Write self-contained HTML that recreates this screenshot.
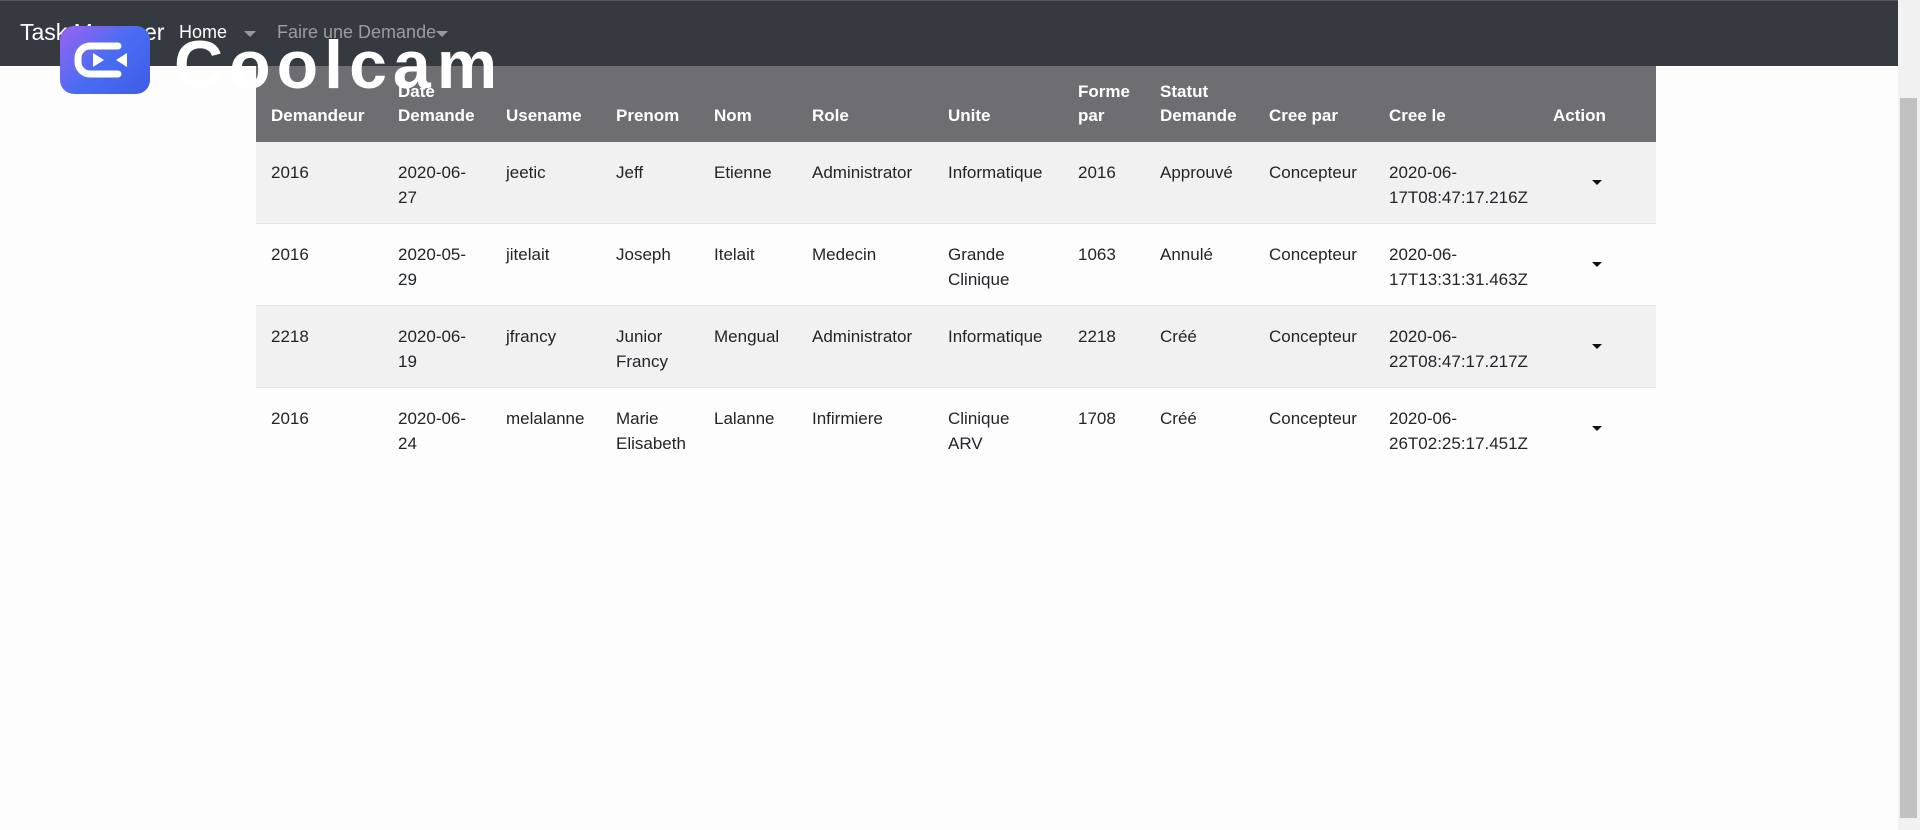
<!DOCTYPE html>
<html><head><meta charset="utf-8"><style>
*{margin:0;padding:0;box-sizing:border-box}
body{width:1920px;height:830px;overflow:hidden;background:#fdfdfd;font-family:"Liberation Sans",sans-serif;color:#212529;position:relative}
.nav{position:absolute;left:0;top:0;width:1898px;height:66px;background:#343a40;border-top:1px solid #555}
.nav span{position:absolute;top:21px;font-size:18px;color:#fff}
.caret{position:absolute;top:30px;width:0;height:0;border-left:6px solid transparent;border-right:6px solid transparent;border-top:6px solid #999}
.sb{position:absolute;left:1898px;top:0;width:22px;height:830px;background:#f1f1f1}
.thumb{position:absolute;left:1900px;top:98px;width:17px;height:720px;background:#c1c1c1}
.thead{position:absolute;left:256px;top:66px;width:1400px;height:76px;background:#6d6d72}
.th{position:absolute;color:#fff;font-weight:bold;font-size:17px;line-height:24px}
.row{position:absolute;left:256px;width:1400px;height:82px;border-bottom:1px solid #dee2e6}
.td{position:absolute;font-size:17px;line-height:25px;color:#212529}
.dd{position:absolute;width:0;height:0;border-left:5px solid transparent;border-right:5px solid transparent;border-top:5px solid #111}
.logo{position:absolute;left:60px;top:26px;width:90px;height:68px;border-radius:14px;background:linear-gradient(135deg,#9a63f0,#4a6cf2 50%,#3d5ce8)}
.cool{position:absolute;left:174px;top:25px;font-size:68px;font-weight:bold;color:#fff;letter-spacing:6px;line-height:80px}
</style></head><body>
<div class="nav">
<span style="left:20px;font-size:23px;top:18px">Task Manager</span>
<span style="left:179px">Home</span><div class="caret" style="left:244px"></div>
<span style="left:277px;color:#9a9da0">Faire une Demande</span><div class="caret" style="left:436px"></div>
</div>
<div class="sb"></div><div class="thumb"></div>
<div class="thead">
<div class="th" style="left:15px;top:38px">Demandeur</div>
<div class="th" style="left:142px;top:14px">Date<br>Demande</div>
<div class="th" style="left:250px;top:38px">Usename</div>
<div class="th" style="left:360px;top:38px">Prenom</div>
<div class="th" style="left:458px;top:38px">Nom</div>
<div class="th" style="left:556px;top:38px">Role</div>
<div class="th" style="left:692px;top:38px">Unite</div>
<div class="th" style="left:822px;top:14px">Forme<br>par</div>
<div class="th" style="left:904px;top:14px">Statut<br>Demande</div>
<div class="th" style="left:1013px;top:38px">Cree par</div>
<div class="th" style="left:1133px;top:38px">Cree le</div>
<div class="th" style="left:1297px;top:38px">Action</div>
</div>

<div class="row" style="top:142px;background:#f1f1f1">
<div class="td" style="left:15px;top:18px">2016</div>
<div class="td" style="left:142px;top:18px">2020-06-<br>27</div>
<div class="td" style="left:250px;top:18px">jeetic</div>
<div class="td" style="left:360px;top:18px">Jeff</div>
<div class="td" style="left:458px;top:18px">Etienne</div>
<div class="td" style="left:556px;top:18px">Administrator</div>
<div class="td" style="left:692px;top:18px">Informatique</div>
<div class="td" style="left:822px;top:18px">2016</div>
<div class="td" style="left:904px;top:18px">Approuvé</div>
<div class="td" style="left:1013px;top:18px">Concepteur</div>
<div class="td" style="left:1133px;top:18px">2020-06-<br>17T08:47:17.216Z</div>
<div class="dd" style="left:1336px;top:38px"></div>
</div>
<div class="row" style="top:224px">
<div class="td" style="left:15px;top:18px">2016</div>
<div class="td" style="left:142px;top:18px">2020-05-<br>29</div>
<div class="td" style="left:250px;top:18px">jitelait</div>
<div class="td" style="left:360px;top:18px">Joseph</div>
<div class="td" style="left:458px;top:18px">Itelait</div>
<div class="td" style="left:556px;top:18px">Medecin</div>
<div class="td" style="left:692px;top:18px">Grande<br>Clinique</div>
<div class="td" style="left:822px;top:18px">1063</div>
<div class="td" style="left:904px;top:18px">Annulé</div>
<div class="td" style="left:1013px;top:18px">Concepteur</div>
<div class="td" style="left:1133px;top:18px">2020-06-<br>17T13:31:31.463Z</div>
<div class="dd" style="left:1336px;top:38px"></div>
</div>
<div class="row" style="top:306px;background:#f1f1f1">
<div class="td" style="left:15px;top:18px">2218</div>
<div class="td" style="left:142px;top:18px">2020-06-<br>19</div>
<div class="td" style="left:250px;top:18px">jfrancy</div>
<div class="td" style="left:360px;top:18px">Junior<br>Francy</div>
<div class="td" style="left:458px;top:18px">Mengual</div>
<div class="td" style="left:556px;top:18px">Administrator</div>
<div class="td" style="left:692px;top:18px">Informatique</div>
<div class="td" style="left:822px;top:18px">2218</div>
<div class="td" style="left:904px;top:18px">Créé</div>
<div class="td" style="left:1013px;top:18px">Concepteur</div>
<div class="td" style="left:1133px;top:18px">2020-06-<br>22T08:47:17.217Z</div>
<div class="dd" style="left:1336px;top:38px"></div>
</div>
<div class="row" style="top:388px;border-bottom:none">
<div class="td" style="left:15px;top:18px">2016</div>
<div class="td" style="left:142px;top:18px">2020-06-<br>24</div>
<div class="td" style="left:250px;top:18px">melalanne</div>
<div class="td" style="left:360px;top:18px">Marie<br>Elisabeth</div>
<div class="td" style="left:458px;top:18px">Lalanne</div>
<div class="td" style="left:556px;top:18px">Infirmiere</div>
<div class="td" style="left:692px;top:18px">Clinique<br>ARV</div>
<div class="td" style="left:822px;top:18px">1708</div>
<div class="td" style="left:904px;top:18px">Créé</div>
<div class="td" style="left:1013px;top:18px">Concepteur</div>
<div class="td" style="left:1133px;top:18px">2020-06-<br>26T02:25:17.451Z</div>
<div class="dd" style="left:1336px;top:38px"></div>
</div>

<div class="logo"><svg width="90" height="68" viewBox="0 0 90 68"><path d="M58 20 H30 a12 12 0 0 0 -12 12 v4 a12 12 0 0 0 12 12 H58" fill="none" stroke="#fff" stroke-width="7" stroke-linecap="round"/><path d="M33 27 L44 34 L33 41 Z M67 27 L56 34 L67 41 Z" fill="#fff"/></svg></div>
<div class="cool">Coolcam</div>
</body></html>
